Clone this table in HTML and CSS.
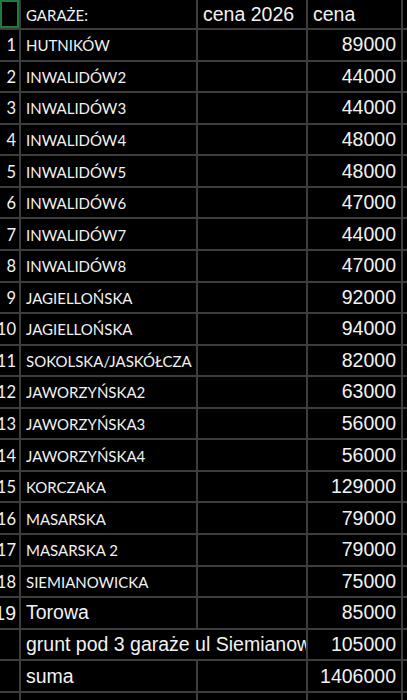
FILE: index.html
```html
<!DOCTYPE html>
<html lang="pl">
<head>
<meta charset="utf-8">
<title>Garaże</title>
<link rel="stylesheet" href="styles.css">
</head>
<body>
<div class="sheet">
  <div class="row head">
    <div class="c n sel"></div>
    <div class="c t">GARAŻE:</div>
    <div class="c a">cena 2026</div>
    <div class="c a">cena</div>
    <div class="c"></div>
  </div>
  <div class="row"><div class="c n">1</div><div class="c t">HUTNIKÓW</div><div class="c"></div><div class="c v">89000</div><div class="c"></div></div>
  <div class="row"><div class="c n">2</div><div class="c t">INWALIDÓW2</div><div class="c"></div><div class="c v">44000</div><div class="c"></div></div>
  <div class="row"><div class="c n">3</div><div class="c t">INWALIDÓW3</div><div class="c"></div><div class="c v">44000</div><div class="c"></div></div>
  <div class="row"><div class="c n">4</div><div class="c t">INWALIDÓW4</div><div class="c"></div><div class="c v">48000</div><div class="c"></div></div>
  <div class="row"><div class="c n">5</div><div class="c t">INWALIDÓW5</div><div class="c"></div><div class="c v">48000</div><div class="c"></div></div>
  <div class="row"><div class="c n">6</div><div class="c t">INWALIDÓW6</div><div class="c"></div><div class="c v">47000</div><div class="c"></div></div>
  <div class="row"><div class="c n">7</div><div class="c t">INWALIDÓW7</div><div class="c"></div><div class="c v">44000</div><div class="c"></div></div>
  <div class="row"><div class="c n">8</div><div class="c t">INWALIDÓW8</div><div class="c"></div><div class="c v">47000</div><div class="c"></div></div>
  <div class="row"><div class="c n">9</div><div class="c t">JAGIELLOŃSKA</div><div class="c"></div><div class="c v">92000</div><div class="c"></div></div>
  <div class="row"><div class="c n">10</div><div class="c t">JAGIELLOŃSKA</div><div class="c"></div><div class="c v">94000</div><div class="c"></div></div>
  <div class="row"><div class="c n">11</div><div class="c t">SOKOLSKA/JASKÓŁCZA</div><div class="c"></div><div class="c v">82000</div><div class="c"></div></div>
  <div class="row"><div class="c n">12</div><div class="c t">JAWORZYŃSKA2</div><div class="c"></div><div class="c v">63000</div><div class="c"></div></div>
  <div class="row"><div class="c n">13</div><div class="c t">JAWORZYŃSKA3</div><div class="c"></div><div class="c v">56000</div><div class="c"></div></div>
  <div class="row"><div class="c n">14</div><div class="c t">JAWORZYŃSKA4</div><div class="c"></div><div class="c v">56000</div><div class="c"></div></div>
  <div class="row"><div class="c n">15</div><div class="c t">KORCZAKA</div><div class="c"></div><div class="c v">129000</div><div class="c"></div></div>
  <div class="row"><div class="c n">16</div><div class="c t">MASARSKA</div><div class="c"></div><div class="c v">79000</div><div class="c"></div></div>
  <div class="row"><div class="c n">17</div><div class="c t">MASARSKA 2</div><div class="c"></div><div class="c v">79000</div><div class="c"></div></div>
  <div class="row"><div class="c n">18</div><div class="c t">SIEMIANOWICKA</div><div class="c"></div><div class="c v">75000</div><div class="c"></div></div>
  <div class="row"><div class="c n a">19</div><div class="c a">Torowa</div><div class="c"></div><div class="c v">85000</div><div class="c"></div></div>
  <div class="row"><div class="c n"></div><div class="c a wide">grunt pod 3 garaże ul Siemianowicka</div><div class="c v">105000</div><div class="c"></div></div>
  <div class="row"><div class="c n"></div><div class="c a">suma</div><div class="c"></div><div class="c v">1406000</div><div class="c"></div></div>
  <div class="row"><div class="c"></div><div class="c"></div><div class="c"></div><div class="c"></div><div class="c"></div></div>
</div>
</body>
</html>
```
FILE: styles.css
```css
html, body {
  margin: 0;
  padding: 0;
  background: #000;
}
body {
  width: 407px;
  height: 700px;
  overflow: hidden;
}
.sheet {
  display: grid;
  grid-template-columns: 19px 175px 108px 93px 1fr;
  grid-template-rows: 28px repeat(21, 29.57px) 1fr;
  gap: 2px;
  background: #3d3d3d;
  height: 700px;
  overflow: hidden;
}
.row {
  display: contents;
}
.c {
  background: #000;
  color: #f2f2f2;
  display: flex;
  align-items: center;
  white-space: nowrap;
  min-width: 0;
}
.t {
  font-family: Lato, "Liberation Sans", sans-serif;
  font-size: 15px;
  padding-left: 5px;
  overflow: hidden;
  padding-top: 1px;
}
.a {
  font-family: "Liberation Sans", Arial, sans-serif;
  font-size: 19.5px;
  padding-left: 5px;
  overflow: hidden;
}
.v {
  font-family: "Liberation Sans", Arial, sans-serif;
  font-size: 19.5px;
  justify-content: flex-end;
  padding-right: 5px;
}
.n {
  font-family: Lato, "Liberation Sans", sans-serif;
  font-size: 16.5px;
  justify-content: flex-end;
  padding-right: 3px;
  padding-top: 1px;
}
.n.a {
  font-family: "Liberation Sans", Arial, sans-serif;
  font-size: 19.5px;
  padding-left: 0;
  overflow: visible;
}
.wide {
  grid-column: span 2;
}
.sel {
  box-sizing: border-box;
  border: 2px solid #1f7a3e;
}
```
